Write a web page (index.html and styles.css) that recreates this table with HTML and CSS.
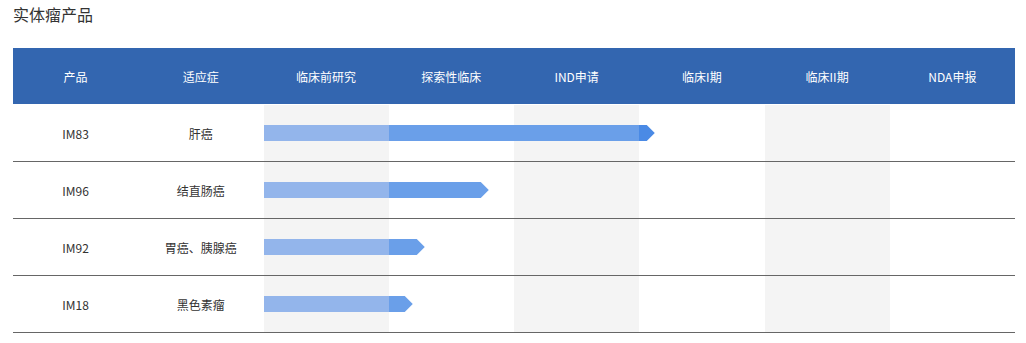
FILE: index.html
```html
<!DOCTYPE html>
<html lang="zh-CN">
<head>
<meta charset="utf-8">
<title>实体瘤产品</title>
<link rel="stylesheet" href="styles.css">
</head>
<body>
<section class="pipeline">
  <h2 class="pipeline-title">实体瘤产品</h2>
  <div class="grid-head">
    <div class="th">产品</div>
    <div class="th">适应症</div>
    <div class="th">临床前研究</div>
    <div class="th">探索性临床</div>
    <div class="th">IND申请</div>
    <div class="th">临床I期</div>
    <div class="th">临床II期</div>
    <div class="th">NDA申报</div>
  </div>
  <div class="grid-body">
    <div class="grid-row">
      <div class="td">IM83</div>
      <div class="td">肝癌</div>
      <div class="td stripe"></div><div class="td"></div><div class="td stripe"></div>
      <div class="td"></div><div class="td stripe"></div><div class="td"></div>
      <div class="bar">
        <span class="seg seg-done"></span>
        <span class="seg seg-active" style="width:250px"></span>
        <span class="seg seg-head"></span>
      </div>
    </div>
    <div class="grid-row">
      <div class="td">IM96</div>
      <div class="td">结直肠癌</div>
      <div class="td stripe"></div><div class="td"></div><div class="td stripe"></div>
      <div class="td"></div><div class="td stripe"></div><div class="td"></div>
      <div class="bar">
        <span class="seg seg-done"></span>
        <span class="seg seg-active seg-tip" style="width:100px"></span>
      </div>
    </div>
    <div class="grid-row">
      <div class="td">IM92</div>
      <div class="td">胃癌、胰腺癌</div>
      <div class="td stripe"></div><div class="td"></div><div class="td stripe"></div>
      <div class="td"></div><div class="td stripe"></div><div class="td"></div>
      <div class="bar">
        <span class="seg seg-done"></span>
        <span class="seg seg-active seg-tip" style="width:36px"></span>
      </div>
    </div>
    <div class="grid-row">
      <div class="td">IM18</div>
      <div class="td">黑色素瘤</div>
      <div class="td stripe"></div><div class="td"></div><div class="td stripe"></div>
      <div class="td"></div><div class="td stripe"></div><div class="td"></div>
      <div class="bar">
        <span class="seg seg-done"></span>
        <span class="seg seg-active seg-tip" style="width:24px"></span>
      </div>
    </div>
  </div>
</section>
</body>
</html>
```
FILE: styles.css
```css
* {
  box-sizing: border-box;
}

body {
  margin: 0;
  background: #fff;
  font-family: "Noto Sans CJK SC", "Noto Sans", sans-serif;
  color: #333;
}

.pipeline {
  width: 1002px;
  margin-left: 13px;
}

.pipeline-title {
  margin: 0;
  height: 48px;
  padding-top: 3px;
  font-size: 16px;
  font-weight: normal;
  line-height: 22px;
  color: #333;
}

.grid-head,
.grid-row {
  display: grid;
  grid-template-columns: repeat(8, 1fr);
}

.grid-head {
  height: 56px;
  background: #3366b0;
}

.th {
  display: flex;
  align-items: center;
  justify-content: center;
  color: #fff;
  font-size: 12px;
}

.grid-body {
  padding-top: 1px;
}

.grid-row {
  height: 57px;
  border-bottom: 1px solid #666;
}

.td {
  grid-row: 1;
  display: flex;
  align-items: center;
  justify-content: center;
  font-size: 12px;
  color: #333;
}

/* each stage cell keeps its own column so the bar can lie across them */
.td:nth-child(1) { grid-column: 1; }
.td:nth-child(2) { grid-column: 2; }
.td:nth-child(3) { grid-column: 3; }
.td:nth-child(4) { grid-column: 4; }
.td:nth-child(5) { grid-column: 5; }
.td:nth-child(6) { grid-column: 6; }
.td:nth-child(7) { grid-column: 7; }
.td:nth-child(8) { grid-column: 8; }

.stripe {
  background: #f4f4f4;
}

.bar {
  grid-row: 1;
  grid-column: 3 / 9;
  align-self: center;
  display: flex;
  height: 16px;
}

.seg {
  display: block;
  height: 16px;
  flex: none;
}

.seg-done {
  width: 16.6667%;
  background: #93b5eb;
}

.seg-active {
  background: #6a9fe9;
}

.seg-tip {
  clip-path: polygon(0 0, calc(100% - 8px) 0, 100% 50%, calc(100% - 8px) 100%, 0 100%);
}

.seg-head {
  width: 16px;
  background: #4a8ae5;
  clip-path: polygon(0 0, 8px 0, 100% 50%, 8px 100%, 0 100%);
}
```
